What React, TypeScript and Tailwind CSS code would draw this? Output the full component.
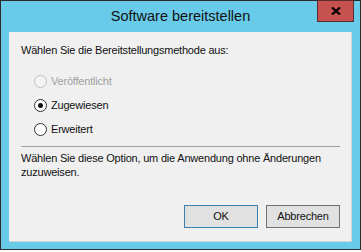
import React from "react";

function Radio({ checked, disabled }: { checked?: boolean; disabled?: boolean }) {
  return (
    <div
      className={
        "w-[13px] h-[13px] rounded-full border flex items-center justify-center " +
        (disabled ? "border-[#bcbcbc] bg-[#f4f4f4]" : "border-[#333333] bg-white")
      }
    >
      {checked && <div className="w-[5px] h-[5px] rounded-full bg-[#111111]" />}
    </div>
  );
}

export default function App() {
  const font = { fontFamily: '"Liberation Sans", Arial, sans-serif' };
  return (
    <div className="w-[361px] h-[252px] bg-white" style={font}>
      <div className="w-[361px] h-[250px] border border-[#2b2b2b] bg-[#69cbea] flex flex-col">
        <div className="h-[31px] relative flex items-center justify-center">
          <span className="text-[14.5px] text-[#111] mt-[1px]">Software bereitstellen</span>
          <div className="absolute right-[6px] top-[-1px] w-[37px] h-[22px] bg-[#c75050] border border-[#5b2e2e] flex items-center justify-center">
            <svg width="10" height="8" viewBox="0 0 10 8">
              <path d="M1 0.5 L9 7.5 M9 0.5 L1 7.5" stroke="#000" strokeWidth="2.2" />
            </svg>
          </div>
        </div>
        <div className="mx-[8px] h-[210px] bg-[#f0f0f0] border-r border-b border-[#d4d4d4] flex flex-col pl-[12px] pr-[11px] text-[11px] tracking-[-0.2px] text-[#111]">
          <div className="mt-[11px] leading-[14px]">Wählen Sie die Bereitstellungsmethode aus:</div>
          <div className="mt-[12px] pl-[13px] flex flex-col">
            <div className="h-[24px] flex items-center gap-[4px]">
              <Radio disabled />
              <span className="text-[#a0a0a0]">Veröffentlicht</span>
            </div>
            <div className="h-[24px] flex items-center gap-[4px]">
              <Radio checked />
              <span>Zugewiesen</span>
            </div>
            <div className="h-[24px] flex items-center gap-[4px]">
              <Radio />
              <span>Erweitert</span>
            </div>
          </div>
          <div className="mt-[5px] h-[1px] bg-[#a0a0a0]" />
          <div className="mt-[5px] leading-[13.5px]">
            Wählen Sie diese Option, um die Anwendung ohne Änderungen
            <br />
            zuzuweisen.
          </div>
          <div className="mt-[26px] flex justify-end gap-[8px]">
            <button className="w-[74px] h-[23px] bg-[#e1e1e1] border border-[#3c7fb1] text-[11px] tracking-[-0.2px] text-[#111]">
              OK
            </button>
            <button className="w-[74px] h-[23px] bg-[#e1e1e1] border border-[#707070] text-[11px] tracking-[-0.2px] text-[#111]">
              Abbrechen
            </button>
          </div>
        </div>
      </div>
    </div>
  );
}
